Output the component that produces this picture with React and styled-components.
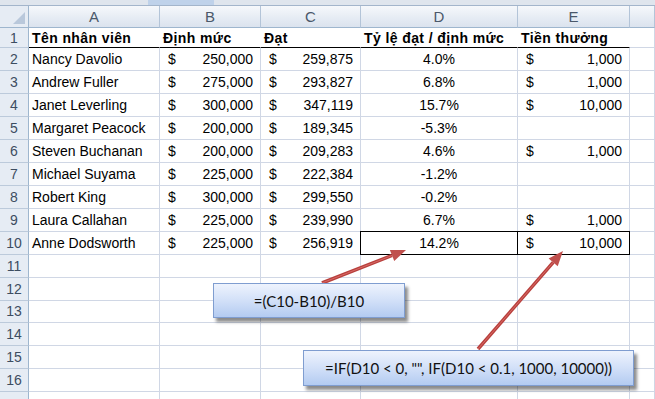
import React from 'react';
import styled, { createGlobalStyle, css } from 'styled-components';

const GlobalStyle = createGlobalStyle`
	html, body {
		margin: 0;
		padding: 0;
		background: #fff;
		overflow: hidden;
	}
	body {
		font-family: 'Liberation Sans', Arial, sans-serif;
	}
`;

const SPage = styled.div`
	position: relative;
	width: 655px;
	height: 399px;
	overflow: hidden;
`;

const STopStrip = styled.div`
	display: flex;
	height: 5px;
	background: #dfe5ed;
	border-bottom: 1px solid #a3b5cb;

	> span {
		margin-left: 148px;
		width: 66px;
		background: #bfd2ea;
	}
`;

const SSheet = styled.div`
	display: grid;
	grid-template-columns: 29px 131px 101px 100px 157px 112px 1fr;
	grid-template-rows: 22px 20px repeat(9, 23px) repeat(7, 22.8px);
`;

const SCorner = styled.div`
	position: relative;
	background: #e6ecf4;
	border-right: 1px solid #9eb6ce;
	border-bottom: 1px solid #9eb6ce;

	&::after {
		content: '';
		position: absolute;
		right: 3px;
		bottom: 3px;
		border-style: solid;
		border-width: 0 0 12px 12px;
		border-color: transparent transparent #b9c8db transparent;
	}
`;

const SColHead = styled.div`
	display: flex;
	align-items: center;
	justify-content: center;
	background: linear-gradient(#f6f8fb, #e6ecf4 55%, #dbe3ee);
	border-right: 1px solid #b3c4d8;
	border-bottom: 1px solid #9eb6ce;
	color: #4a586a;
	font-size: 15px;
`;

const SRowHead = styled.div`
	display: flex;
	align-items: center;
	justify-content: center;
	background: #e6ecf4;
	border-right: 1px solid #9eb6ce;
	border-bottom: 1px solid #bccadb;
	color: #3d4d61;
	font-size: 14px;
`;

const SCell = styled.div`
	position: relative;
	display: flex;
	align-items: center;
	justify-content: ${(p) => (p.$align === 'center' ? 'center' : 'flex-start')};
	padding: 0 3px;
	border-right: 1px solid #d0d7e5;
	border-bottom: 1px solid #d0d7e5;
	color: #000;
	font-size: 14px;
	white-space: nowrap;

	${(p) =>
		p.$head &&
		css`
			font-weight: bold;
			letter-spacing: 0.4px;
			border-right-color: #fff;
			border-bottom-color: #000;
		`}

	${(p) =>
		p.$money &&
		css`
			justify-content: space-between;
			padding: 0 7px 0 8px;
		`}

	${(p) =>
		p.$selected &&
		css`
			&::after {
				content: '';
				position: absolute;
				top: -1px;
				left: -1px;
				right: -1px;
				bottom: -1px;
				border: 1px solid #000;
			}
		`}
`;

const SCallout = styled.div`
	position: absolute;
	display: flex;
	align-items: center;
	justify-content: center;
	box-sizing: border-box;
	border: 1px solid #7f9dd0;
	background: linear-gradient(#eef3fd, #d2e0f8 50%, #b3cbf1);
	box-shadow: 3px 4px 3px rgba(0, 0, 0, 0.45);
	color: #111;
	font-family: Lato, 'Open Sans', sans-serif;
	font-size: 15px;
`;

const SArrows = styled.svg`
	position: absolute;
	left: 0;
	top: 0;
	pointer-events: none;
`;

const rows = [
	['Nancy Davolio', '250,000', '259,875', '4.0%', '1,000'],
	['Andrew Fuller', '275,000', '293,827', '6.8%', '1,000'],
	['Janet Leverling', '300,000', '347,119', '15.7%', '10,000'],
	['Margaret Peacock', '200,000', '189,345', '-5.3%', ''],
	['Steven Buchanan', '200,000', '209,283', '4.6%', '1,000'],
	['Michael Suyama', '225,000', '222,384', '-1.2%', ''],
	['Robert King', '300,000', '299,550', '-0.2%', ''],
	['Laura Callahan', '225,000', '239,990', '6.7%', '1,000'],
	['Anne Dodsworth', '225,000', '256,919', '14.2%', '10,000'],
];

const Money = ({ value, selected }) => (
	<SCell $money $selected={selected}>
		{value && (
			<>
				<span>$</span>
				<span>{value}</span>
			</>
		)}
	</SCell>
);

const Arrow = ({ x1, y1, x2, y2 }) => {
	const a = Math.atan2(y2 - y1, x2 - x1);
	const len = 15;
	const w = 6;
	const bx = x2 - len * Math.cos(a);
	const by = y2 - len * Math.sin(a);
	const px = -Math.sin(a) * w;
	const py = Math.cos(a) * w;
	return (
		<g>
			<line x1={x1} y1={y1} x2={bx} y2={by} stroke="#b8403d" strokeWidth="3.5" />
			<line x1={x1} y1={y1} x2={bx} y2={by} stroke="#d86a66" strokeWidth="1" />
			<polygon
				points={`${x2},${y2} ${bx + px},${by + py} ${bx - px},${by - py}`}
				fill="#c0504d"
			/>
		</g>
	);
};

const App = () => {
	const cols = ['A', 'B', 'C', 'D', 'E', ''];
	return (
		<SPage>
			<GlobalStyle />
			<STopStrip>
				<span />
			</STopStrip>
			<SSheet>
				<SCorner />
				{cols.map((c, i) => (
					<SColHead key={i}>{c}</SColHead>
				))}

				<SRowHead>1</SRowHead>
				<SCell $head>Tên nhân viên</SCell>
				<SCell $head>Định mức</SCell>
				<SCell $head>Đạt</SCell>
				<SCell $head>Tỷ lệ đạt / định mức</SCell>
				<SCell $head>Tiền thưởng</SCell>
				<SCell />

				{rows.map((r, i) => {
					const last = i === rows.length - 1;
					return (
						<React.Fragment key={r[0]}>
							<SRowHead>{i + 2}</SRowHead>
							<SCell>{r[0]}</SCell>
							<Money value={r[1]} />
							<Money value={r[2]} />
							<SCell $align="center" $selected={last}>
								{r[3]}
							</SCell>
							<Money value={r[4]} selected={last} />
							<SCell />
						</React.Fragment>
					);
				})}

				{[11, 12, 13, 14, 15, 16, 17].map((n) => (
					<React.Fragment key={n}>
						<SRowHead>{n < 17 ? n : ''}</SRowHead>
						{cols.map((c, i) => (
							<SCell key={i} />
						))}
					</React.Fragment>
				))}
			</SSheet>

			<SArrows width="655" height="399">
				<Arrow x1={322} y1={283} x2={406} y2={250} />
				<Arrow x1={478} y1={349} x2={563} y2={251} />
			</SArrows>

			<SCallout style={{ left: 213, top: 283, width: 192, height: 35 }}>
				=(C10-B10)/B10
			</SCallout>
			<SCallout style={{ left: 303, top: 350, width: 331, height: 36 }}>
				=IF(D10 &lt; 0, "", IF(D10 &lt; 0.1, 1000, 10000))
			</SCallout>
		</SPage>
	);
};

export default App;
